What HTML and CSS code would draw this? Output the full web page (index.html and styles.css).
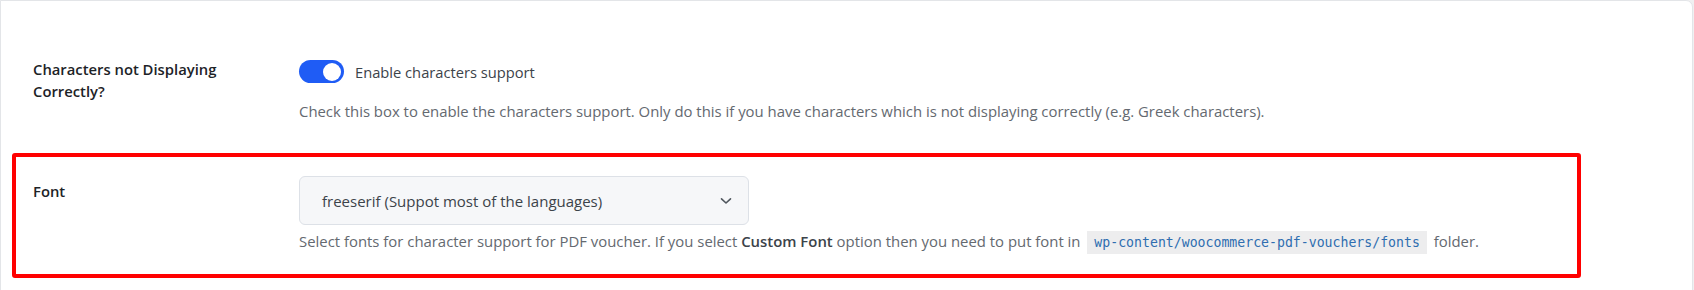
FILE: index.html
```html
<!DOCTYPE html>
<html lang="en">
<head>
    <meta charset="UTF-8">
    <meta name="viewport" content="width=device-width, initial-scale=1.0">
    <title>PDF Vouchers - Misc Settings</title>
    <link rel="stylesheet" href="styles.css">
</head>
<body>
    <div class="card">
        <div class="row">
            <div class="label">Characters not Displaying Correctly?</div>
            <div class="field">
                <label class="switch-line">
                    <span class="switch"><span class="knob"></span></span>
                    <span class="switch-text">Enable characters support</span>
                </label>
                <p class="desc">Check this box to enable the characters support. Only do this if you have characters which is not displaying correctly (e.g. Greek characters).</p>
            </div>
        </div>

        <div class="row highlight">
            <div class="label label-font">Font</div>
            <div class="field">
                <div class="select">
                    <span>freeserif (Suppot most of the languages)</span>
                    <svg class="chevron" width="12" height="8" viewBox="0 0 12 8">
                        <path d="M1.5 1.8 L6 6 L10.5 1.8" fill="none" stroke="#50575e" stroke-width="1.6" stroke-linecap="round" stroke-linejoin="round"/>
                    </svg>
                </div>
                <p class="desc help">Select fonts for character support for PDF voucher. If you select <strong>Custom Font</strong> option then you need to put font in <code>wp-content/woocommerce-pdf-vouchers/fonts</code> folder.</p>
            </div>
        </div>
    </div>
</body>
</html>
```

FILE: styles.css
```css
body {
    margin: 0;
    background: #f0f0f1;
    font-family: "Open Sans", "Noto Sans", sans-serif;
    font-size: 14.9px;
    color: #3c434a;
}
.card {
    background: #fff;
    border: 1px solid #e3e5e8;
    border-radius: 0 7px 7px 0;
    width: 1693px;
    height: 300px;
    box-sizing: border-box;
    padding-top: 39px;
}
.row {
    display: grid;
    grid-template-columns: 266px 1fr;
    margin: 0 111px 0 11px;
    border: 4px solid transparent;
    border-radius: 3px;
    padding: 16px 0 28px 17px;
}
.row.highlight {
    border-color: #ff0000;
    padding: 19px 0 21px 17px;
}
.label {
    font-weight: 600;
    font-size: 14.8px;
    color: #1d2327;
    line-height: 22px;
    margin-top: -2px;
    width: 220px;
}
.label-font {
    margin-top: 4px;
}
.field {
    display: flex;
    flex-direction: column;
    align-items: flex-start;
}
.switch-line {
    display: flex;
    align-items: center;
    gap: 11px;
    height: 23px;
}
.switch {
    width: 45px;
    height: 23px;
    border-radius: 12px;
    background: #1f5cf5;
    display: flex;
    align-items: center;
    justify-content: flex-end;
    padding-right: 3px;
    box-sizing: border-box;
}
.knob {
    width: 18px;
    height: 18px;
    border-radius: 50%;
    background: #fff;
}
.switch-text {
    color: #3c434a;
    font-size: 14.7px;
    line-height: 20px;
}
.desc {
    margin: 18px 0 0;
    color: #646970;
    line-height: 20px;
}
.select {
    width: 450px;
    height: 49px;
    box-sizing: border-box;
    border: 1px solid #dde1e7;
    border-radius: 6px;
    background: #f6f7f9;
    display: flex;
    align-items: center;
    justify-content: space-between;
    padding: 0 16px 0 22px;
    font-size: 15px;
    color: #3c434a;
}
.help {
    margin-top: 6px;
}
.help strong {
    font-weight: 600;
    color: #3c434a;
}
code {
    font-family: "DejaVu Sans Mono", "Liberation Mono", monospace;
    font-size: 13.2px;
    color: #2f6db0;
    background: #ededee;
    padding: 4px 7px;
    margin: 0 3px;
}
```
